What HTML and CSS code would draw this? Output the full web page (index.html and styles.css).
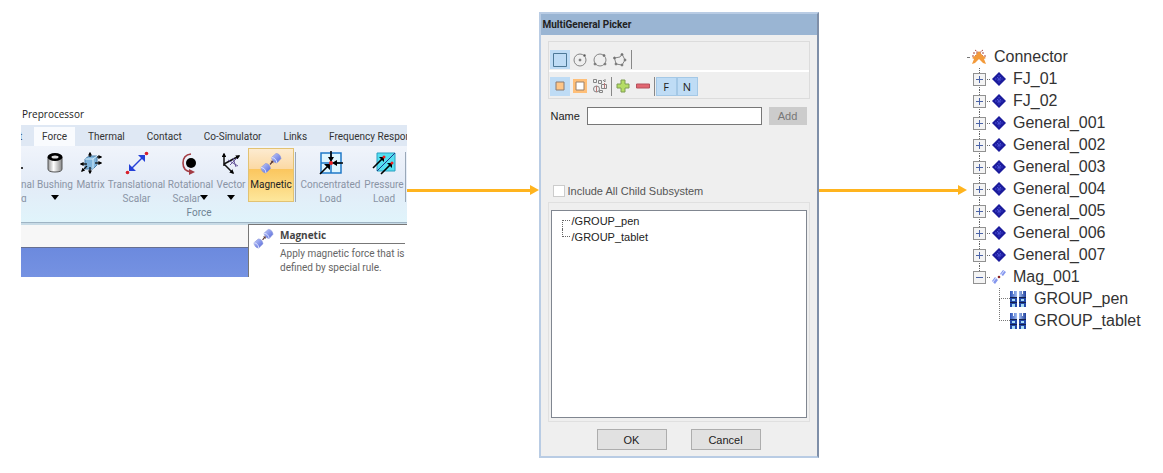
FILE: index.html
```
<!DOCTYPE html>
<html lang="en">

<head>
  <meta charset="UTF-8">
  <meta name="viewport" content="width=device-width, initial-scale=1.0">
  <title>Magnetic connector</title>
  <link rel="stylesheet" href="styles.css">
</head>

<body>
  <!-- Shared icons -->
  <svg class="sprite" aria-hidden="true">
    <defs>
      <linearGradient id="magnet-fill" x1="0" y1="0" x2="1" y2="1">
        <stop offset="0" stop-color="#c3cdfb" />
        <stop offset="1" stop-color="#4f63d8" />
      </linearGradient>
      <linearGradient id="body-fill" x1="0" y1="0" x2="1" y2="0">
        <stop offset="0" stop-color="#2a50b8" />
        <stop offset=".5" stop-color="#b4cdf8" />
        <stop offset="1" stop-color="#1f3f9c" />
      </linearGradient>
      <linearGradient id="steel-fill" x1="0" y1="0" x2="1" y2="0">
        <stop offset="0" stop-color="#999" />
        <stop offset=".4" stop-color="#fff" />
        <stop offset="1" stop-color="#888" />
      </linearGradient>
      <marker id="tip" viewBox="0 0 6 6" refX="4" refY="3" markerWidth="3" markerHeight="3" orient="auto-start-reverse">
        <path d="M0 0 6 3 0 6z" />
      </marker>
    </defs>
    <symbol id="magnet" viewBox="0 0 22 22">
      <g stroke="#8490d8" stroke-width=".6" fill="url(#magnet-fill)">
        <path d="M11.500 5.500 16 1.500q4 0 5 5L17 11q-4.500-.5-5.500-5.500z" />
        <path d="M1 15.500 5.500 11.500q4 0 5 5L6 21q-4.500-.5-5-5.500z" />
      </g>
      <path d="M11.500 5.500q4.500 .5 5.500 5.500M1 15.500q4.500 .5 5 5.500" fill="none" stroke="#dfe5ff" />
      <path d="M10 12.500 12.500 9.500" stroke="#5a3838" stroke-width="1.200" />
      <path d="M10.500 8.800h2.800v2.800z" fill="#5a3838" />
    </symbol>
    <symbol id="magnet-small" viewBox="0 0 14 14">
      <path d="M8 4 11 0l3 2-3 4zM0 11l3-4 3 3-3 4z" fill="#8496ee" />
      <path d="M9 5l3-4M1 12l3-4" stroke="#dbe2ff" />
      <circle cx="7" cy="7" r="1.300" fill="#8c2626" />
    </symbol>
    <symbol id="joint" viewBox="0 0 14 14">
      <path d="M7 0 14 7 7 14 0 7z" fill="#1b1b9c" />
      <path d="M7 3v8M3 7h8M5 5l4 4M9 5l-4 4" stroke="#4f55dc" stroke-dasharray="1.500 1" />
    </symbol>
    <symbol id="bodies" viewBox="0 0 16 16">
      <path d="M0 0h3v3h1V0h3v6H0zM9 0h3v3h1V0h3v6H9z" fill="url(#body-fill)" />
      <path d="M0 7h7v4H0zM9 7h7v4H9zM0 12h7v4H0zM9 12h7v4H9z" fill="#2348a8" />
      <path d="M2 8h3v2H2zM11 8h3v2h-3zM2 13h3v3H2zM11 13h3v3h-3z" fill="#a8dcf4" />
      <path d="M0 6.500h7M9 6.500h7M0 11.500h7M9 11.500h7" stroke="#14204c" />
    </symbol>
  </svg>

  <main class="flow">
    <section class="ribbon-window">
      <div class="window-title">Preprocessor</div>
      <nav class="tabs">
        <a class="tab tab-cut" href="#">t</a>
        <a class="tab tab-active" href="#">Force</a>
        <a class="tab" href="#">Thermal</a>
        <a class="tab" href="#">Contact</a>
        <a class="tab" href="#">Co-Simulator</a>
        <a class="tab" href="#">Links</a>
        <a class="tab" href="#">Frequency Response</a>
      </nav>
      <div class="ribbon">
        <div class="tools">
          <button class="tool tool-cut"><svg viewBox="0 0 24 24"><circle cx="1" cy="17" r="1" /></svg><span>nal<br>g</span></button>
          <button class="tool tool-bushing">
            <svg viewBox="0 0 24 24">
              <path d="M5 6v12q0 3 7 3t7-3V6z" fill="url(#steel-fill)" stroke="#555" />
              <ellipse cx="12" cy="6" rx="7.500" ry="4" />
              <ellipse cx="12" cy="6" rx="3.500" ry="1.500" fill="#ddd" />
            </svg>
            <span>Bushing<br><i class="drop"></i></span>
          </button>
          <button class="tool tool-matrix">
            <svg viewBox="0 0 24 24">
              <path d="M6 8l4-3h8v9l-4 4H6z" fill="#7fb4dc" stroke="#4c7fa8" />
              <path d="M6 8h8v10M14 8l4-3" fill="none" stroke="#d4ecfa" />
              <g stroke="#111" stroke-width="1.300">
                <path d="M11 6V2" marker-end="url(#tip)" />
                <path d="M18 6h4" marker-end="url(#tip)" />
                <path d="M16 12h6" marker-end="url(#tip)" />
                <path d="M8 13H2" marker-end="url(#tip)" />
                <path d="M11 16v6" marker-end="url(#tip)" />
                <path d="M8 15l-5 5" marker-end="url(#tip)" />
              </g>
            </svg>
            <span>Matrix</span>
          </button>
          <button class="tool tool-wide">
            <svg viewBox="0 0 24 24">
              <path d="M5 19 19 5" stroke="#2440d8" stroke-width="1.500" />
              <path d="M4 13v7h7zM20 11V4h-7z" fill="#2440d8" />
              <circle cx="2.500" cy="21.500" r="1.800" fill="#d8202c" />
              <circle cx="21.500" cy="2.500" r="1.800" fill="#d8202c" />
            </svg>
            <span>Translational<br>Scalar</span>
          </button>
          <button class="tool tool-rotational">
            <svg viewBox="0 0 24 24">
              <path d="M12 3Q4 4 4 12t8 9" fill="none" stroke="#a33c44" stroke-width="1.600" />
              <path d="M10 18l6 3-6 3z" fill="#a33c44" />
              <circle cx="12" cy="12" r="5" />
            </svg>
            <span>Rotational<br>Scalar<i class="drop"></i></span>
          </button>
          <button class="tool tool-vector">
            <svg viewBox="0 0 24 24">
              <g fill="none" stroke="#111" stroke-width="1.500">
                <path d="M5 15V3" marker-end="url(#tip)" />
                <path d="M5 13 20 5" marker-end="url(#tip)" />
                <path d="M5 13l9 9" marker-end="url(#tip)" />
              </g>
              <path d="M9 9l10 6M11 14l7-7M14 7l3 9" stroke="#66569a" />
            </svg>
            <span>Vector<br><i class="drop"></i></span>
          </button>
          <button class="tool tool-magnetic"><svg><use href="#magnet" /></svg><span>Magnetic</span></button>
          <i class="divider"></i>
          <button class="tool tool-concentrated">
            <svg viewBox="0 0 24 24">
              <path d="M2 2h20v20H2zM12 2v20M2 12h20" fill="#dff6ff" stroke="#2079c8" stroke-width="1.500" />
              <path d="M12 0v8M24 12h-8M1 23l8-8" stroke="#000" stroke-width="1.600" />
              <path d="M9 6h6l-3 5zM18 9v6l-5-3zM5 13h6v6z" />
              <circle cx="12" cy="12" r="2" fill="#e22" />
            </svg>
            <span>Concentrated<br>Load</span>
          </button>
          <button class="tool tool-pressure">
            <svg viewBox="0 0 24 24">
              <path d="M5 2h18v18H5z" fill="#54dff0" stroke="#2a9fc0" />
              <path d="M5 20 23 2" stroke="#238" />
              <path d="M1 17 10 8M9 23l9-9" stroke="#000" stroke-width="1.600" />
              <path d="M7 6h5v5zM15 12h5v5z" />
              <circle cx="12" cy="6" r="1.500" fill="#e22" />
              <circle cx="20" cy="12" r="1.500" fill="#e22" />
            </svg>
            <span>Pressure<br>Load</span>
          </button>
          <i class="divider"></i>
        </div>
        <div class="group-name">Force</div>
      </div>
      <div class="workspace">
        <div class="viewport"></div>
        <div class="tooltip" role="tooltip">
          <svg><use href="#magnet" /></svg>
          <div>
            <h2>Magnetic</h2>
            <p>Apply magnetic force that is<br>defined by special rule.</p>
          </div>
        </div>
      </div>
    </section>

    <div class="arrow"></div>

    <section class="dialog">
      <h1 class="dialog-title">MultiGeneral Picker</h1>
      <div class="dialog-body">
        <div class="toolbars">
          <div class="toolbar">
            <button class="pick pick-on" aria-label="Rectangle"><svg viewBox="0 0 16 16"><path d="M1.500 1.500h13v13h-13z" stroke="#4d7896" /></svg></button>
            <button class="pick" aria-label="Circle by center"><svg viewBox="0 0 16 16"><circle cx="8" cy="8" r="6" /><circle cx="8" cy="8" r="1" fill="#555" /><circle cx="12.500" cy="3.500" r="1" fill="#555" /></svg></button>
            <button class="pick" aria-label="Circle by points"><svg viewBox="0 0 16 16"><circle cx="8" cy="8" r="6" /><g fill="#555"><circle cx="12" cy="3.500" r="1" /><circle cx="3" cy="12" r="1" /><circle cx="13" cy="12" r="1" /></g></svg></button>
            <button class="pick" aria-label="Polygon"><svg viewBox="0 0 16 16"><path d="M2.500 6 8 5l2-3 3 6-3 5-6-1z" /><g fill="#555"><circle cx="2.500" cy="6" r="1" /><circle cx="10" cy="2.500" r="1" /><circle cx="13" cy="8" r="1" /><circle cx="10" cy="13" r="1" /><circle cx="4" cy="12" r="1" /></g></svg></button>
            <i class="bar"></i>
          </div>
          <div class="toolbar">
            <button class="pick pick-on" aria-label="Inside"><svg viewBox="0 0 16 16"><path d="M4 4h8v8H4z" fill="#ffc687" stroke="#8b7a70" /></svg></button>
            <button class="pick" aria-label="Outside"><svg viewBox="0 0 16 16"><path d="M1 1h14v14H1z" fill="#ffbf78" stroke="none" /><path d="M4 4h8v8H4z" fill="#fff" stroke="#9b8068" /></svg></button>
            <button class="pick" aria-label="Select by type"><svg viewBox="0 0 16 16"><path d="M1.500 1.500h3v3h-3zM6.500 2.500h3v3h-3zM11 2l2 2M13 1v3M9.500 6.500h5v4h-5zM7.500 12.500h3v2h-3z" /><circle cx="4.500" cy="11" r="3" /><path d="M4.500 8v6M12.500 5v5" stroke="#b77" /></svg></button>
            <i class="bar"></i>
            <button class="pick" aria-label="Include"><svg viewBox="0 0 16 16"><path d="M6 2h4v4h4v4h-4v4H6v-4H2V6h4z" fill="#b5dd65" stroke="#7f9d55" /></svg></button>
            <button class="pick" aria-label="Exclude"><svg viewBox="0 0 16 16"><path d="M1.500 6h13v4h-13z" fill="#e26670" stroke="#b4505c" /></svg></button>
            <i class="bar"></i>
            <button class="pick pick-on pick-letter">F</button>
            <button class="pick pick-on pick-letter">N</button>
          </div>
        </div>
        <div class="name-row">
          <label for="name">Name</label>
          <input id="name" type="text">
          <button class="add" disabled>Add</button>
        </div>
        <label class="check"><input type="checkbox" disabled>Include All Child Subsystem</label>
        <div class="list-frame">
          <ul class="list">
            <li>/GROUP_pen</li>
            <li>/GROUP_tablet</li>
          </ul>
        </div>
        <div class="actions">
          <button>OK</button>
          <button>Cancel</button>
        </div>
      </div>
    </section>

    <div class="arrow"></div>

    <section class="tree">
      <div class="row root">
        <svg viewBox="0 0 16 16">
          <path d="M2 4h12M1 7h14" stroke="#a8463c" stroke-dasharray="2 1" />
          <path d="M4 1l8 6M12 1 4 7" stroke="#a8463c" stroke-dasharray="2 1" />
          <path d="M8 2l3 4 4 3-2 1 2 5-3-1-4-4-4 4-3 1 2-5-2-1 4-3z" fill="#f39a3a" />
        </svg>
        Connector
      </div>
      <ul class="branch">
        <li class="row"><button class="expand" aria-label="Expand"></button><svg><use href="#joint" /></svg>FJ_01</li>
        <li class="row"><button class="expand" aria-label="Expand"></button><svg><use href="#joint" /></svg>FJ_02</li>
        <li class="row"><button class="expand" aria-label="Expand"></button><svg><use href="#joint" /></svg>General_001</li>
        <li class="row"><button class="expand" aria-label="Expand"></button><svg><use href="#joint" /></svg>General_002</li>
        <li class="row"><button class="expand" aria-label="Expand"></button><svg><use href="#joint" /></svg>General_003</li>
        <li class="row"><button class="expand" aria-label="Expand"></button><svg><use href="#joint" /></svg>General_004</li>
        <li class="row"><button class="expand" aria-label="Expand"></button><svg><use href="#joint" /></svg>General_005</li>
        <li class="row"><button class="expand" aria-label="Expand"></button><svg><use href="#joint" /></svg>General_006</li>
        <li class="row"><button class="expand" aria-label="Expand"></button><svg><use href="#joint" /></svg>General_007</li>
        <li class="row"><button class="expand expand-open" aria-label="Collapse"></button><svg><use href="#magnet-small" /></svg>Mag_001</li>
      </ul>
      <ul class="leaves">
        <li class="row"><svg><use href="#bodies" /></svg>GROUP_pen</li>
        <li class="row"><svg><use href="#bodies" /></svg>GROUP_tablet</li>
      </ul>
    </section>
  </main>
</body>

</html>
```
FILE: styles.css
```
*,
*::before,
*::after {
  box-sizing: border-box;
}

body,
h1,
h2,
p,
ul {
  margin: 0;
  padding: 0;
}

ul {
  list-style: none;
}

button {
  padding: 0;
  border: 0;
  background: none;
  font: inherit;
  color: inherit;
}

svg {
  display: block;
  flex: none;
}

:root {
  --arrow: #ffb41e;
  --pick: #bfdcf5;
  --ff-ribbon: Roboto, "Open Sans", sans-serif;
  --ff-title: "Open Sans", "Noto Sans", sans-serif;
  --ff-dialog: "Liberation Sans", Arial, sans-serif;
}

body {
  background-color: #fff;
  font-family: var(--ff-dialog);
}

.sprite {
  position: absolute;
  width: 0;
  height: 0;
}

.flow {
  display: grid;
  grid-template-columns: 386px minmax(20px, 132fr) 280px minmax(20px, 149fr) 184px;
  align-items: start;
  padding: 12px 12px 12px 21px;
}

/* Arrows between the steps */
.arrow {
  display: flex;
  align-items: center;
  margin-top: 173px;
}

.arrow::before {
  content: "";
  flex: 1;
  height: 3px;
  background-color: var(--arrow);
}

.arrow::after {
  content: "";
  border: 5px solid transparent;
  border-left: 9px solid var(--arrow);
  border-right: 0;
}

/* Ribbon */
.ribbon-window {
  margin-top: 92px;
  overflow: hidden;
  font-family: var(--ff-ribbon);
  font-size: 10px;
  white-space: nowrap;
}

.window-title {
  height: 21px;
  padding-left: 1px;
  font-family: var(--ff-title);
  line-height: 20px;
  color: #222;
}

.tabs {
  display: flex;
  height: 21px;
  padding-top: 2px;
  background-color: #dfe8f4;
}

.tab {
  flex: none;
  padding: 0 11px;
  line-height: 19px;
  text-decoration: none;
  color: #333;
}

.tab-cut {
  width: 13px;
  padding: 0;
  text-indent: -2px;
}

.tab-active {
  margin-right: 2px;
  padding: 0 8px;
  background-color: #f9fbfe;
}

.ribbon {
  height: 77px;
  padding-top: 2px;
  border-bottom: 1px solid #9fb4c4;
  background: linear-gradient(#f0f4fb, #e3ebf7 50%, #e0f4fb);
}

.tools {
  display: flex;
  height: 54px;
}

.tool {
  display: flex;
  flex-direction: column;
  align-items: center;
  gap: 3px;
  padding-top: 3px;
  line-height: 14px;
  color: #8a94a5;
  overflow: hidden;
}

.tool svg {
  width: 24px;
  height: 24px;
}

.tool-cut {
  width: 14px;
  align-items: flex-start;
  text-align: left;
}

.tool-bushing {
  width: 40px;
}

.tool-matrix {
  width: 31px;
}

.tool-wide {
  width: 61px;
}

.tool-rotational {
  width: 47px;
}

.tool-vector {
  width: 34px;
}

.tool-magnetic {
  width: 46px;
  padding-top: 2px;
  border: 1px solid #e2c272;
  color: #222;
  background: linear-gradient(#fdebd0, #fbd9a4 38%, #fbc65e 39%, #fde79c);
}

.tool-magnetic svg {
  padding: 1px;
}

.tool-concentrated {
  width: 67px;
}

.tool-pressure {
  width: 40px;
}

.drop {
  display: inline-block;
  border: 4px solid transparent;
  border-top: 5px solid #000;
  border-bottom: 0;
  vertical-align: 2px;
}

.divider {
  width: 1px;
  margin: 4px 1px 0;
  background-color: #9aa8b8;
}

.group-name {
  padding-right: 30px;
  line-height: 21px;
  text-align: center;
  color: #6f8494;
}

.workspace {
  position: relative;
  height: 54px;
  border-top: 2px solid #c8dbe6;
  background-color: #f7f7f7;
}

.viewport {
  height: 30px;
  margin-top: 22px;
  border-top: 1px solid #666f90;
  background: linear-gradient(#6c8ade, #7592e2);
}

.tooltip {
  display: flex;
  gap: 6px;
  position: absolute;
  top: -1px;
  left: 227px;
  right: 0;
  height: 53px;
  padding: 3px 3px 0 4px;
  border: solid #777;
  border-width: 1px 0 0 1px;
  background-color: #fff;
  color: #666;
}

.tooltip svg {
  width: 21px;
  height: 21px;
}

.tooltip div {
  flex: 1;
}

.tooltip h2 {
  margin-bottom: 3px;
  border-bottom: 1px solid #777;
  font-family: var(--ff-title);
  font-size: 10px;
  line-height: 15px;
  color: #444;
}

.tooltip p {
  line-height: 14px;
}

/* Picker dialog */
.dialog {
  border: 2px solid #b9cce4;
  border-right-color: #7f8fa8;
  background-color: #efefef;
  font-size: 11px;
  color: #222;
}

.dialog-title {
  padding-left: 2px;
  font-family: var(--ff-ribbon);
  font-size: 10px;
  line-height: 21px;
  background-color: #9ab5d3;
}

.dialog-body {
  padding: 6px 7px;
}

.toolbars {
  border: 1px solid #dcdcdc;
}

.toolbar {
  display: flex;
  align-items: center;
  height: 28px;
  padding: 7px 0 0 1px;
}

.toolbar + .toolbar {
  padding-top: 2px;
  border-top: 2px solid #fff;
}

.pick {
  display: grid;
  place-items: center;
  width: 20px;
  height: 19px;
}

.pick svg {
  width: 16px;
  height: 16px;
  fill: none;
  stroke: #858585;
}

.pick-on {
  background-color: var(--pick);
}

.pick-letter {
  width: 21px;
  border: 1px solid #a4c8e6;
  font-family: var(--ff-title);
}

.bar {
  width: 1px;
  height: 19px;
  margin: 0 1px;
  background-color: #888;
}

.name-row {
  display: flex;
  align-items: center;
  gap: 7px;
  margin: 8px 3px 0;
}

.name-row input {
  flex: 1;
  min-width: 0;
  height: 18px;
  border: 1px solid #777;
  background-color: #fff;
}

.add {
  width: 38px;
  height: 18px;
  background-color: #ccc;
  color: #777;
}

.check {
  display: flex;
  align-items: center;
  gap: 3px;
  margin: 59px 0 4px 5px;
  line-height: 14px;
  color: #555;
}

.check input {
  appearance: none;
  width: 12px;
  height: 12px;
  margin: 0;
  border: 1px solid #ccc;
  background-color: #fff;
}

.list-frame {
  padding: 7px 2px 3px;
  border: 1px solid #e0e0e0;
}

.list {
  height: 208px;
  padding: 2px 10px;
  border: 1px solid #808690;
  background-color: #fff;
}

.list li {
  display: flex;
  height: 16px;
  line-height: 16px;
}

.list li::before {
  content: "";
  width: 8px;
  height: 8px;
  margin-right: 2px;
  border: dotted #666;
  border-width: 0 0 1px 1px;
}

.list li:first-child::before {
  height: 9px;
  margin-top: 7px;
  border-width: 1px 0 0 1px;
}

.actions {
  display: flex;
  justify-content: center;
  gap: 24px;
  margin-top: 7px;
}

.actions button {
  width: 70px;
  height: 21px;
  border: 1px solid #adadad;
  background-color: #e1e1e1;
}

/* Model tree */
.tree {
  margin-top: 34px;
  font-size: 16px;
  white-space: nowrap;
  color: #333;
}

.row {
  display: flex;
  align-items: center;
  height: 22px;
}

.root::before {
  content: "";
  width: 2px;
  border-top: 1px dotted #777;
}

.root svg {
  width: 16px;
  height: 16px;
  margin: 0 7px 0 2px;
}

.branch {
  margin-left: 6px;
}

.branch svg {
  width: 14px;
  height: 14px;
  margin-right: 7px;
}

/* Stem above and below the expander, stub to its right */
.branch .row {
  background:
    repeating-linear-gradient(#666 0 1px, transparent 1px 2px) 6px 0 / 1px 5px no-repeat,
    repeating-linear-gradient(90deg, #666 0 1px, transparent 1px 2px) 14px 11px / 4px 1px no-repeat,
    repeating-linear-gradient(#666 0 1px, transparent 1px 2px) 6px 100% / 1px 5px no-repeat;
}

.branch .row:last-child {
  background-size: 1px 5px, 4px 1px, 0 0;
}

.expand {
  width: 13px;
  height: 13px;
  margin-right: 6px;
  border: 1px solid #919191;
  background:
    linear-gradient(#4b63a7, #4b63a7) center / 7px 1px no-repeat,
    linear-gradient(#4b63a7, #4b63a7) center / 1px 7px no-repeat,
    #f4f4f4;
}

.expand-open {
  background: linear-gradient(#4b63a7, #4b63a7) center / 7px 1px no-repeat, #f4f4f4;
}

.leaves {
  margin-left: 32px;
}

.leaves .row::before {
  content: "";
  align-self: flex-start;
  width: 11px;
  height: 11px;
  border: dotted #777;
  border-width: 0 0 1px 1px;
}

.leaves .row + .row::before {
  height: 22px;
  margin-top: -11px;
}

.leaves svg {
  width: 16px;
  height: 16px;
  margin-right: 8px;
}
```
